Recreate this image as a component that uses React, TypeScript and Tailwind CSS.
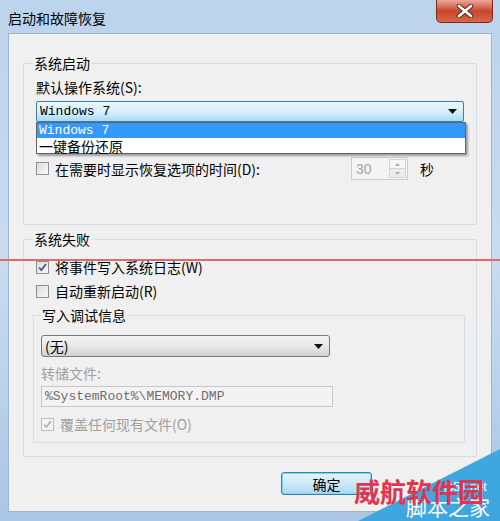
import React from 'react';

const cjk = { fontFamily: '"Noto Sans CJK SC", "Liberation Sans", sans-serif' };
const mono = { fontFamily: '"Liberation Mono", "Noto Sans CJK SC", monospace' };

function CheckBox({ checked = false, disabled = false }: { checked?: boolean; disabled?: boolean }) {
  return (
    <span
      className={`relative flex h-[13px] w-[13px] shrink-0 items-center justify-center border ${
        disabled ? 'border-[#bcbcbc] bg-[#f4f4f4]' : 'border-[#8e8f8f] bg-gradient-to-br from-[#dcdcdc] to-[#fafafa]'
      }`}
    >
      {checked && (
        <svg width="11" height="11" viewBox="0 0 11 11">
          <path
            d="M2 5.5 L4.3 8 L9 2"
            fill="none"
            stroke={disabled ? '#b4b4b4' : '#3c5a9a'}
            strokeWidth="1.8"
          />
        </svg>
      )}
    </span>
  );
}

function Arrow() {
  return (
    <svg width="9" height="5" viewBox="0 0 9 5">
      <path d="M0 0 H9 L4.5 5 Z" fill="#111" />
    </svg>
  );
}

export default function App() {
  return (
    <div
      className="relative flex h-[521px] w-[500px] flex-col overflow-hidden bg-gradient-to-b from-[#bcd3ec] via-[#c9dcf0] to-[#a9c6e6]"
      style={cjk}
    >
      {/* Title bar */}
      <div className="flex h-[33px] items-start justify-between">
        <span className="mt-[10px] ml-[8px] text-[14px] leading-[16px] text-black">启动和故障恢复</span>
        <div className="mr-[7px] flex h-[23px] w-[57px] items-center justify-center rounded-b-[5px] border border-t-0 border-[#7b2a1d] bg-gradient-to-b from-[#e9a898] via-[#c8452b] to-[#d86845]">
          <svg width="18" height="14" viewBox="0 0 18 14">
            <path d="M3 2 L15 12 M15 2 L3 12" stroke="#5a1a10" strokeWidth="4.5" strokeLinecap="round" />
            <path d="M3 2 L15 12 M15 2 L3 12" stroke="#ffffff" strokeWidth="2.8" strokeLinecap="round" />
          </svg>
        </div>
      </div>

      {/* Client area */}
      <div className="mr-[8px] ml-[8px] mb-[9px] flex flex-1 flex-col border border-[#9fb2c8] bg-[#f0f0f0] px-[14px] text-[14px] leading-[16px] text-black">
        {/* Group 1 */}
        <fieldset className="mt-[21px] border border-[#d5dfe5] px-[12px] pb-[44px]">
          <legend className="ml-[-3px] px-[1px]">系统启动</legend>
          <div className="mt-[8px]">默认操作系统(S):</div>
          <div className="relative mt-[6px]">
            <div className="flex h-[21px] items-center justify-between rounded-[2px] border border-[#3c7fb1] bg-gradient-to-b from-[#eaf6fd] via-[#d9f0fc] to-[#a7d9f5] pr-[6px] pl-[3px]">
              <span className="text-[13px]" style={mono}>Windows 7</span>
              <Arrow />
            </div>
            {/* open dropdown list */}
            <div className="absolute top-[21px] left-0 z-10 w-[430px] border border-[#646464] bg-white shadow-[2px_2px_2px_rgba(0,0,0,0.35)]">
              <div className="flex h-[15px] items-center bg-[#3399ff] pl-[2px] text-[13px] text-white" style={mono}>
                Windows 7
              </div>
              <div className="flex h-[15px] items-center pl-[2px] text-[14px]">一键备份还原</div>
            </div>
          </div>
          <div className="mt-[35px] flex h-[23px] items-center">
            <div className="flex w-[315px] items-center gap-[6px]">
              <CheckBox />
              <span>在需要时显示恢复选项的时间(D):</span>
            </div>
            <div className="flex h-[23px] w-[57px] items-center justify-between border border-[#c9ccd2] bg-[#f4f4f4] pr-[1px] pl-[4px]">
              <span className="text-[14px] text-[#a3a3a3]" style={{ fontFamily: '"Liberation Sans", sans-serif' }}>30</span>
              <div className="flex h-[19px] w-[17px] flex-col border border-[#d4d4d4]">
                <div className="flex flex-1 items-center justify-center bg-[#f7f7f7]">
                  <svg width="5" height="3" viewBox="0 0 5 3"><path d="M0 3 L2.5 0 L5 3 Z" fill="#b0b0b0" /></svg>
                </div>
                <div className="flex flex-1 items-center justify-center border-t border-[#d4d4d4] bg-[#ececec]">
                  <svg width="5" height="3" viewBox="0 0 5 3"><path d="M0 0 H5 L2.5 3 Z" fill="#b0b0b0" /></svg>
                </div>
              </div>
            </div>
            <span className="ml-[12px]">秒</span>
          </div>
        </fieldset>

        {/* Group 2 */}
        <fieldset className="mt-[6px] border border-[#d5dfe5] pr-[11px] pl-[9px] pb-[13px]">
          <legend className="px-[1px]">系统失败</legend>
          <div className="mt-[12px] ml-[3px] flex items-center gap-[6px]">
            <CheckBox checked />
            <span>将事件写入系统日志(W)</span>
          </div>
          <div className="mt-[8px] ml-[3px] flex items-center gap-[6px]">
            <CheckBox />
            <span>自动重新启动(R)</span>
          </div>
          <fieldset className="mt-[8px] border border-[#d5dfe5] pl-[7px] pb-[10px]">
            <legend className="px-[1px]">写入调试信息</legend>
            <div className="mt-[12px] flex h-[22px] w-[289px] items-center justify-between rounded-[3px] border border-[#7a7a7a] bg-gradient-to-b from-[#f3f3f3] via-[#e8e8e8] to-[#d1d1d1] pr-[6px] pl-[3px]">
              <span>(无)</span>
              <Arrow />
            </div>
            <div className="mt-[8px] text-[#a0a0a0]">转储文件:</div>
            <div className="mt-[5px] flex h-[21px] w-[292px] items-center border border-[#c8c8c8] bg-[#f3f3f3] pl-[3px] text-[13px] text-[#6d6d6d]" style={mono}>
              %SystemRoot%\MEMORY.DMP
            </div>
            <div className="mt-[9px] flex items-center gap-[6px]">
              <CheckBox checked disabled />
              <span className="text-[#a0a0a0]">覆盖任何现有文件(O)</span>
            </div>
          </fieldset>
        </fieldset>

        {/* Buttons */}
        <div className="mt-[15px] flex">
          <div className="ml-[258px] flex h-[23px] w-[91px] items-center justify-center rounded-[3px] border border-[#3c7fb1] bg-gradient-to-b from-[#e5f4fc] via-[#cde9f8] to-[#a9d8f2] shadow-[inset_0_0_0_1px_#7fd6f4]">
            确定
          </div>
        </div>
      </div>

      {/* red annotation line */}
      <div className="absolute top-[259px] left-0 h-[2px] w-[500px] bg-[#de6a6a]" />

      {/* watermark */}
      <div className="absolute right-0 bottom-0 h-[72px] w-[142px] bg-[#3fa7df] [clip-path:polygon(100%_0,100%_100%,0_100%)]" />
      <div className="absolute top-[480px] left-[444px] text-[12px] leading-[14px] text-white" style={{ fontFamily: '"Liberation Sans", sans-serif' }}>
        jb51.net
      </div>
      <div className="absolute top-[494px] left-[406px] text-[21px] leading-[24px] text-white">脚本之家</div>
      <div className="absolute top-[476px] left-[354px] text-[26px] leading-[29px] font-bold text-[#e2334f]">威航软件园</div>
    </div>
  );
}
